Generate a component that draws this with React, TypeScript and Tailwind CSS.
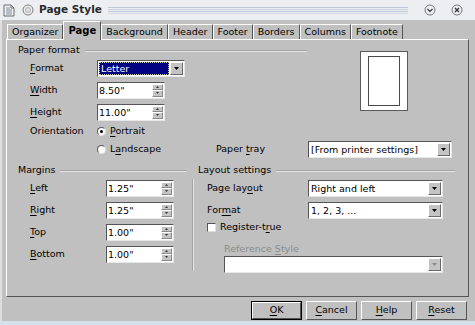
import type { ReactNode } from "react";

// mnemonic label: underline the character at index i
function M({ text, i }: { text: string; i: number }) {
  return (
    <span className="whitespace-nowrap">
      {text.slice(0, i)}
      <span className="underline underline-offset-[2px]">{text[i]}</span>
      {text.slice(i + 1)}
    </span>
  );
}

function Header({ title, className = "" }: { title: string; className?: string }) {
  return (
    <div className={`flex items-center h-[13px] ${className}`}>
      <span className="whitespace-nowrap">{title}</span>
      <div className="flex-1 ml-[5px] flex flex-col">
        <div className="h-px bg-[#a4a4a4]" />
        <div className="h-px bg-[#e4e4e4]" />
      </div>
    </div>
  );
}

function Arrow({ up = false, color = "#000" }: { up?: boolean; color?: string }) {
  return (
    <svg width="5" height="3" viewBox="0 0 5 3">
      <path d={up ? "M0 3 L2.5 0 L5 3 Z" : "M0 0 L5 0 L2.5 3 Z"} fill={color} />
    </svg>
  );
}

function Spin({ value, width }: { value: string; width: number }) {
  return (
    <div
      className="h-[17px] bg-white border border-t-[#555] border-l-[#555] border-b-[#e8e8e8] border-r-[#e8e8e8] flex"
      style={{ width }}
    >
      <span className="flex-1 pl-[1px] leading-[15px]">{value}</span>
      <div className="w-[11px] flex flex-col my-[1px] mr-[1px]">
        <div className="flex-1 bg-[#c4c4c4] border border-t-white border-l-white border-b-[#8a8a8a] border-r-[#8a8a8a] flex items-center justify-center">
          <svg width="3" height="2" viewBox="0 0 3 2">
            <path d="M0 2 L1.5 0 L3 2 Z" fill="#333" />
          </svg>
        </div>
        <div className="flex-1 bg-[#c4c4c4] border border-t-white border-l-white border-b-[#8a8a8a] border-r-[#8a8a8a] flex items-center justify-center">
          <svg width="3" height="2" viewBox="0 0 3 2">
            <path d="M0 0 L3 0 L1.5 2 Z" fill="#333" />
          </svg>
        </div>
      </div>
    </div>
  );
}

function Combo({
  value,
  width,
  selected = false,
  disabled = false,
}: {
  value: string;
  width: number;
  selected?: boolean;
  disabled?: boolean;
}) {
  return (
    <div
      className="h-[17px] bg-white border border-t-[#555] border-l-[#555] border-b-[#e8e8e8] border-r-[#e8e8e8] flex"
      style={{ width }}
    >
      <div className="flex-1 p-px">
        {selected ? (
          <div className="h-full bg-[#000080] text-white border border-dotted border-[#c8c8a0] leading-[11px] pl-[1px]">
            {value}
          </div>
        ) : (
          <span className="leading-[13px] block pl-[1px]">{value}</span>
        )}
      </div>
      <div className="w-[13px] my-[1px] mr-[1px] bg-[#c4c4c4] border border-t-white border-l-white border-b-[#6a6a6a] border-r-[#6a6a6a] flex items-center justify-center">
        <Arrow color={disabled ? "#8a8a8a" : "#000"} />
      </div>
    </div>
  );
}

function Row({
  label,
  labelWidth,
  h = 22,
  children,
}: {
  label: ReactNode;
  labelWidth: number;
  h?: number;
  children?: ReactNode;
}) {
  return (
    <div className="flex items-center" style={{ height: h }}>
      <div style={{ width: labelWidth }} className="shrink-0">
        {label}
      </div>
      {children}
    </div>
  );
}

function Radio({ checked = false }: { checked?: boolean }) {
  return (
    <div className="w-[9px] h-[9px] rounded-full bg-white border border-t-[#555] border-l-[#555] border-b-[#ddd] border-r-[#ddd] flex items-center justify-center shrink-0">
      {checked && <div className="w-[3px] h-[3px] rounded-full bg-black" />}
    </div>
  );
}

function Tab({ label, active = false }: { label: string; active?: boolean }) {
  if (active) {
    return (
      <div className="h-[19px] -mb-px px-[4px] bg-[#c0c0c0] border border-b-0 border-t-white border-l-white border-r-[#555] font-bold text-[10px] leading-[17px] z-10">
        {label}
      </div>
    );
  }
  return (
    <div className="h-[15px] mt-[3px] px-[4px] border border-b-0 border-t-white border-l-white border-r-[#555] leading-[13px]">
      {label}
    </div>
  );
}

function Button({ children, def = false }: { children: ReactNode; def?: boolean }) {
  return (
    <div
      className={`w-[51px] h-[19px] ${def ? "border border-black" : ""} flex`}
    >
      <div className="flex-1 bg-[#c0c0c0] border border-t-white border-l-white border-b-[#555] border-r-[#555] flex items-center justify-center">
        {children}
      </div>
    </div>
  );
}

function TitleBar() {
  return (
    <div className="h-[20px] bg-[#eceef1] flex items-center pl-[3px] pr-[12px]">
      <svg width="12" height="13" viewBox="0 0 12 13" className="shrink-0">
        <path d="M1 1 H8 L11 4 V12 H1 Z" fill="#f4f4f4" stroke="#6a6a6a" strokeWidth="1" />
        <path d="M3 4 H7 M3 6 H9 M3 8 H9 M3 10 H9" stroke="#7a8ca0" strokeWidth="1" />
        <path d="M8 1 V4 H11" fill="none" stroke="#6a6a6a" strokeWidth="1" />
      </svg>
      <svg width="12" height="12" viewBox="0 0 12 12" className="ml-[7px] shrink-0">
        <circle cx="6" cy="6" r="5" fill="#f0f0f0" stroke="#7a7a7a" strokeWidth="1" />
        <circle cx="6" cy="6" r="2.5" fill="#e2e2e2" stroke="#a8a8a8" strokeWidth="1" />
      </svg>
      <span className="ml-[5px] font-bold text-[10.5px] text-[#2a2a2a] whitespace-nowrap">
        Page Style
      </span>
      <div className="ml-[6px] w-[300px] flex flex-col gap-[1px]">
        <div className="h-px bg-[#bdc8d6]" />
        <div className="h-px bg-[#c6d0dc]" />
        <div className="h-px bg-[#bdc8d6]" />
        <div className="h-px bg-[#d2dae4]" />
      </div>
      <div className="flex-1" />
      <svg width="12" height="12" viewBox="0 0 12 12" className="shrink-0">
        <circle cx="6" cy="6" r="5" fill="none" stroke="#777" strokeWidth="1" />
        <path d="M3.5 5 L6 7.5 L8.5 5" fill="none" stroke="#333" strokeWidth="1.2" />
      </svg>
      <svg width="12" height="12" viewBox="0 0 12 12" className="ml-[15px] shrink-0">
        <circle cx="6" cy="6" r="5" fill="none" stroke="#777" strokeWidth="1" />
        <path d="M4 4 L8 8 M8 4 L4 8" stroke="#333" strokeWidth="1.3" />
      </svg>
    </div>
  );
}

export default function App() {
  return (
    <div className="w-[475px] h-[325px] overflow-hidden flex flex-col bg-[#c0c0c0] font-['DejaVu_Sans',sans-serif] text-[9.5px] text-black">
      <TitleBar />

      {/* dialog body */}
      <div className="h-[301px] flex flex-col border-l-2 border-l-[#dedede] pl-[4px]">
        {/* tabs */}
        <div className="h-[18px] mt-px flex items-start ml-[1px]">
          <Tab label="Organizer" />
          <Tab label="Page" active />
          <Tab label="Background" />
          <Tab label="Header" />
          <Tab label="Footer" />
          <Tab label="Borders" />
          <Tab label="Columns" />
          <Tab label="Footnote" />
        </div>

        {/* tab panel */}
        <div className="w-[463px] h-[258px] border border-t-white border-l-white border-r-[#555] border-b-[#555] pt-[4px] pl-[11px]">
          {/* Paper format */}
          <div className="flex">
            <div className="w-[289px]">
              <Header title="Paper format" />
              <div className="pl-[12px]">
                <Row label={<M text="Format" i={0} />} labelWidth={67}>
                  <Combo value="Letter" width={88} selected />
                </Row>
                <Row label={<M text="Width" i={0} />} labelWidth={67}>
                  <Spin value={'8.50"'} width={68} />
                </Row>
                <Row label={<M text="Height" i={0} />} labelWidth={67}>
                  <Spin value={'11.00"'} width={68} />
                </Row>
                <Row label="Orientation" labelWidth={67} h={17}>
                  <Radio checked />
                  <span className="ml-[4px]">
                    <M text="Portrait" i={0} />
                  </span>
                </Row>
              </div>
            </div>
            <div className="ml-[53px] mt-[7px] w-[48px] h-[60px] bg-white border border-[#5a5a5a] px-[7px] py-[4px]">
              <div className="w-full h-full border border-[#4a4a4a]" />
            </div>
          </div>
          <div className="pl-[12px]">
            <Row label="" labelWidth={67} h={18}>
              <Radio />
              <span className="ml-[4px] w-[106px]">
                <M text="Landscape" i={1} />
              </span>
              <span className="w-[92px]">
                <M text="Paper tray" i={6} />
              </span>
              <Combo value="[From printer settings]" width={144} />
            </Row>
          </div>

          {/* Margins + Layout settings */}
          <div className="flex mt-[6px]">
            <div className="w-[168px]">
              <Header title="Margins" />
              <div className="pl-[12px]">
                <Row label={<M text="Left" i={0} />} labelWidth={76}>
                  <Spin value={'1.25"'} width={68} />
                </Row>
                <Row label={<M text="Right" i={0} />} labelWidth={76}>
                  <Spin value={'1.25"'} width={68} />
                </Row>
                <Row label={<M text="Top" i={0} />} labelWidth={76}>
                  <Spin value={'1.00"'} width={68} />
                </Row>
                <Row label={<M text="Bottom" i={0} />} labelWidth={76}>
                  <Spin value={'1.00"'} width={68} />
                </Row>
              </div>
            </div>
            <div className="ml-[6px] mt-[15px] w-[2px] h-[92px] flex">
              <div className="w-px bg-[#a4a4a4]" />
              <div className="w-px bg-[#e4e4e4]" />
            </div>
            <div className="ml-[4px] w-[257px]">
              <Header title="Layout settings" />
              <div className="pl-[9px]">
                <Row label={<M text="Page layout" i={8} />} labelWidth={101}>
                  <Combo value="Right and left" width={135} />
                </Row>
                <Row label={<M text="Format" i={3} />} labelWidth={101}>
                  <Combo value="1, 2, 3, ..." width={135} />
                </Row>
                <div className="h-[12px] flex items-center">
                  <div className="w-[9px] h-[9px] bg-white border border-t-[#555] border-l-[#555] border-b-[#ddd] border-r-[#ddd]" />
                  <span className="ml-[4px]">
                    <M text="Register-true" i={10} />
                  </span>
                </div>
                <div className="pl-[17px]">
                  <div className="h-[14px] mt-[9px] flex items-center text-[#8c8c8c]">
                    <M text="Reference Style" i={10} />
                  </div>
                  <Combo value="" width={219} disabled />
                </div>
              </div>
            </div>
          </div>
        </div>

        {/* buttons */}
        <div className="mt-[4px] flex justify-end gap-[4px] pr-[8px]">
          <Button def>
            <M text="OK" i={0} />
          </Button>
          <Button>
            <M text="Cancel" i={0} />
          </Button>
          <Button>
            <M text="Help" i={0} />
          </Button>
          <Button>
            <M text="Reset" i={0} />
          </Button>
        </div>
      </div>

      <div className="flex-1 bg-[#d4e0ec]" />
    </div>
  );
}
